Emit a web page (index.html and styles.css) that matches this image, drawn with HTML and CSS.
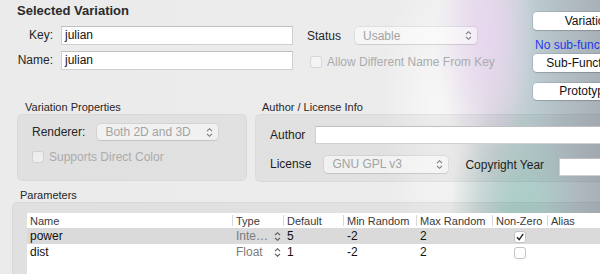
FILE: index.html
```html
<!DOCTYPE html>
<html>
<head>
<meta charset="utf-8">
<link rel="stylesheet" href="styles.css">
</head>
<body>
<div class="window">
  <section class="top">
    <div class="selected">
      <h1 class="title">Selected Variation</h1>
      <div class="form">
        <label class="flabel">Key:</label><div class="field">julian</div>
        <label class="flabel">Name:</label><div class="field">julian</div>
      </div>
    </div>
    <div class="status">
      <div class="row">
        <span>Status</span>
        <div class="popup status-popup"><span>Usable</span><svg class="stepper" viewBox="0 0 7 11" width="7" height="11"><path d="M1 4.2 L3.5 1.7 L6 4.2 M1 6.8 L3.5 9.3 L6 6.8"/></svg></div>
      </div>
      <div class="check"><span class="cb"></span><span>Allow Different Name From Key</span></div>
    </div>
    <div class="actions">
      <div class="btn">Variations</div>
      <div class="note">No sub-functions</div>
      <div class="btn btn-sub">Sub-Functions…</div>
      <div class="btn btn-proto">Prototype…</div>
    </div>
  </section>

  <section class="groups">
    <div class="group vp">
      <div class="group-title">Variation Properties</div>
      <div class="box vp-box">
        <div class="row renderer-row">
          <span>Renderer:</span>
          <div class="popup renderer-popup"><span>Both 2D and 3D</span><svg class="stepper" viewBox="0 0 7 11" width="7" height="11"><path d="M1 4.2 L3.5 1.7 L6 4.2 M1 6.8 L3.5 9.3 L6 6.8"/></svg></div>
        </div>
        <div class="check vp-check"><span class="cb"></span><span>Supports Direct Color</span></div>
      </div>
    </div>
    <div class="group author">
      <div class="group-title author-title">Author / License Info</div>
      <div class="box author-box">
        <div class="row author-row">
          <span class="dark">Author</span>
          <div class="field author-field"></div>
        </div>
        <div class="row license-row">
          <span class="dark">License</span>
          <div class="popup license-popup"><span>GNU GPL v3</span><svg class="stepper" viewBox="0 0 7 11" width="7" height="11"><path d="M1 4.2 L3.5 1.7 L6 4.2 M1 6.8 L3.5 9.3 L6 6.8"/></svg></div>
          <span class="dark copyright">Copyright Year</span>
          <div class="field year-field"></div>
        </div>
      </div>
    </div>
  </section>

  <section class="params">
    <div class="group-title">Parameters</div>
    <div class="box params-box">
      <table class="ptable">
        <colgroup>
          <col class="c-name"><col class="c-type"><col class="c-def"><col class="c-min"><col class="c-max"><col class="c-nz"><col class="c-alias">
        </colgroup>
        <thead>
          <tr><th class="first">Name</th><th>Type</th><th>Default</th><th>Min Random</th><th>Max Random</th><th>Non-Zero</th><th>Alias</th></tr>
        </thead>
        <tbody>
          <tr class="sel">
            <td>power</td>
            <td><div class="type"><span>Inte…</span><svg class="stepper" viewBox="0 0 7 11" width="7" height="11"><path d="M1 4.2 L3.5 1.7 L6 4.2 M1 6.8 L3.5 9.3 L6 6.8"/></svg></div></td>
            <td>5</td><td>-2</td><td>2</td>
            <td class="nz"><span class="tcb"><svg viewBox="0 0 12 12" width="12" height="12"><path d="M3 6.3 L5.2 8.6 L9.2 2.8"/></svg></span></td>
            <td></td>
          </tr>
          <tr>
            <td>dist</td>
            <td><div class="type"><span>Float</span><svg class="stepper" viewBox="0 0 7 11" width="7" height="11"><path d="M1 4.2 L3.5 1.7 L6 4.2 M1 6.8 L3.5 9.3 L6 6.8"/></svg></div></td>
            <td>1</td><td>-2</td><td>2</td>
            <td class="nz"><span class="tcb"></span></td>
            <td></td>
          </tr>
          <tr class="filler"><td colspan="7"></td></tr>
        </tbody>
      </table>
    </div>
  </section>
</div>
</body>
</html>
```

FILE: styles.css
```css
html, body {
  margin: 0;
  padding: 0;
}
body {
  width: 600px;
  height: 274px;
  overflow: hidden;
  font-family: "Liberation Sans", Arial, sans-serif;
  font-size: 12px;
  color: #262626;
}
.window {
  position: relative;
  width: 600px;
  height: 274px;
  overflow: hidden;
  background:
    radial-gradient(ellipse 50px 120px at 485px 35px, rgba(232, 214, 240, 0.9), rgba(232, 214, 240, 0)),
    radial-gradient(ellipse 65px 120px at 515px 215px, rgba(160, 205, 192, 0.8), rgba(160, 205, 192, 0)),
    radial-gradient(ellipse 55px 150px at 435px 110px, rgba(250, 250, 250, 0.75), rgba(250, 250, 250, 0)),
    linear-gradient(90deg, #ebebeb 0, #ececec 400px, #eeeeee 450px, #d9d6de 498px, #bfced3 530px, #b2bfc5 560px, #a9b0b8 600px);
}
.row {
  display: flex;
  align-items: center;
}

/* top area */
.top {
  display: flex;
  height: 100px;
  padding-left: 17px;
}
.selected {
  flex: none;
  width: 276px;
}
.title {
  margin: 3px 0 0;
  font-size: 13px;
  font-weight: bold;
  line-height: 16px;
  color: #2a2a2a;
}
.form {
  display: grid;
  grid-template-columns: 36px 232px;
  grid-auto-rows: 19px;
  column-gap: 8px;
  row-gap: 6px;
  margin-top: 7px;
}
.flabel {
  text-align: right;
  line-height: 19px;
}
.field {
  box-sizing: border-box;
  height: 19px;
  line-height: 17px;
  padding-left: 3px;
  background: #fff;
  border: 1px solid #d0d0d0;
  border-top-color: #bfbfbf;
  color: #111;
}
.status {
  flex: none;
  width: 226px;
  margin-left: 14px;
  padding-top: 27px;
  box-sizing: border-box;
}
.status .row {
  gap: 14px;
}
.popup {
  box-sizing: border-box;
  display: flex;
  align-items: center;
  justify-content: space-between;
  padding: 0 5px 0 8px;
  background: rgba(255, 255, 255, 0.55);
  border-radius: 4px;
  box-shadow: 0 0 0 0.5px rgba(0, 0, 0, 0.12), 0 1px 1px rgba(0, 0, 0, 0.07);
  color: #a3a3a3;
}
.status-popup {
  width: 122px;
  height: 17px;
}
.stepper path {
  fill: none;
  stroke: #7a7a7a;
  stroke-width: 1.1;
}
.check {
  display: flex;
  align-items: center;
  gap: 5px;
  height: 12px;
  margin-top: 12px;
  margin-left: 3px;
  color: #ababab;
  white-space: nowrap;
}
.cb {
  flex: none;
  box-sizing: border-box;
  width: 12px;
  height: 12px;
  border-radius: 3px;
  border: 1px solid rgba(0, 0, 0, 0.12);
  background: rgba(255, 255, 255, 0.45);
}
.actions {
  flex: none;
  width: 116px;
  padding-top: 12px;
}
.btn {
  width: 116px;
  height: 18px;
  line-height: 18px;
  text-align: center;
  background: #fff;
  border-radius: 4px;
  box-shadow: 0 0 0 0.5px rgba(0, 0, 0, 0.18), 0 1px 1px rgba(0, 0, 0, 0.12);
  color: #111;
  white-space: nowrap;
}
.note {
  margin: 7px 0 0 2px;
  line-height: 16px;
  color: #2438ef;
  white-space: nowrap;
}
.btn-sub {
  margin-top: 1px;
}
.btn-proto {
  margin-top: 11px;
  height: 17px;
  line-height: 17px;
}

/* groups */
.groups {
  display: flex;
  gap: 8px;
  padding: 1px 0 0 17px;
}
.group {
  flex: none;
}
.group-title {
  font-size: 11px;
  line-height: 13px;
  padding-left: 8px;
  color: #262626;
}
.author-title {
  padding-left: 7px;
}
.box {
  box-sizing: border-box;
  background: rgba(0, 0, 0, 0.045);
  border: 1px solid rgba(0, 0, 0, 0.035);
  border-radius: 5px;
}
.vp {
  width: 230px;
}
.vp-box {
  height: 67px;
  padding: 9px 14px;
}
.renderer-row {
  gap: 12px;
}
.renderer-popup {
  width: 121px;
  height: 16px;
}
.vp-check {
  margin-top: 11px;
  margin-left: 0;
}
.author {
  width: 420px;
}
.author-box {
  height: 68px;
  padding: 11px 14px;
}
.dark {
  color: #1e1e1e;
  white-space: nowrap;
}
.author-row {
  gap: 10px;
}
.author-field {
  flex: 1;
  height: 18px;
}
.license-row {
  margin-top: 8px;
}
.license-popup {
  flex: none;
  width: 124px;
  height: 17px;
  margin-left: 13px;
}
.copyright {
  margin-left: 17px;
  position: relative;
  top: 1px;
}
.year-field {
  flex: none;
  width: 80px;
  height: 18px;
  margin: 6px 0 0 15px;
}

/* parameters */
.params {
  margin-top: 7px;
  padding-left: 12px;
}
.params-box {
  width: 640px;
  height: 90px;
  padding: 10px 0 0 14px;
}
.ptable {
  width: 720px;
  table-layout: fixed;
  border-collapse: collapse;
  background: #fff;
}
.c-name { width: 205px; }
.c-type { width: 51px; }
.c-def { width: 60px; }
.c-min { width: 73px; }
.c-max { width: 76px; }
.c-nz { width: 55px; }
.c-alias { width: 200px; }
.ptable th {
  height: 15px;
  padding: 0 0 0 4px;
  font-size: 11px;
  font-weight: normal;
  text-align: left;
  color: #3a3a3a;
  white-space: nowrap;
  overflow: hidden;
  background: linear-gradient(#d8d8d8, #d8d8d8) no-repeat left center / 1px 11px;
}
.ptable th.first {
  padding-left: 3px;
  background: none;
}
.ptable td {
  height: 16px;
  padding: 0 0 0 4px;
  color: #111;
  white-space: nowrap;
}
.ptable td:first-child {
  padding-left: 3px;
}
.ptable tr.sel td {
  background: #dadada;
}
.type {
  display: flex;
  align-items: center;
  justify-content: space-between;
  padding-right: 2px;
  color: #7c7c7c;
}
.type .stepper path {
  stroke: #555;
}
.ptable td.nz {
  padding: 0;
  text-align: center;
}
.tcb {
  display: inline-block;
  box-sizing: border-box;
  width: 12px;
  height: 12px;
  margin-top: 2px;
  vertical-align: top;
  border: 1px solid #c4c4c4;
  border-radius: 3px;
  background: #fff;
}
.tcb svg {
  display: block;
  margin: -1px 0 0 -1px;
}
.tcb path {
  fill: none;
  stroke: #222;
  stroke-width: 1.4;
}
.filler td {
  height: 30px;
  background: #fff;
}
```
